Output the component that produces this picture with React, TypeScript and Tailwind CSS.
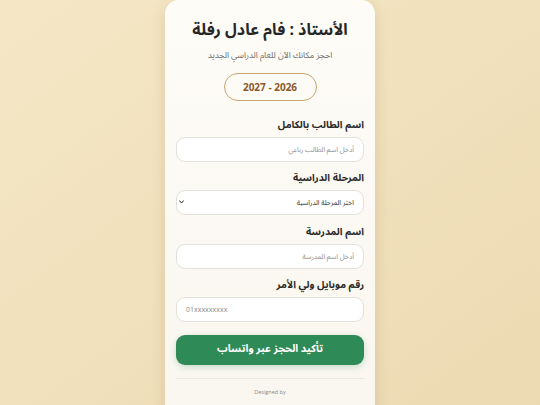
import React from "react";

const font = {
  fontFamily: '"Noto Sans Arabic", "Noto Kufi Arabic", "DejaVu Sans", "Noto Sans", sans-serif',
};

function Field({ label, children }: { label: string; children: React.ReactNode }) {
  return (
    <div className="flex flex-col">
      <div className="h-[14px] text-[10px] leading-[14px] font-bold text-[#2b2b2b] text-right">{label}</div>
      <div className="mt-[5px] h-[25px] relative">{children}</div>
    </div>
  );
}

const inputCls =
  "block w-full h-[25px] rounded-[9px] border border-[#e3e1dc] bg-white px-[9px] text-[7px] leading-[23px] placeholder:text-[#8f8f8f] outline-none";

export default function App() {
  return (
    <div
      dir="rtl"
      style={font}
      className="w-[540px] h-[405px] overflow-hidden bg-gradient-to-br from-[#f5e7c6] to-[#ecdab2] flex justify-center"
    >
      <div className="w-[210px] h-[440px] bg-gradient-to-b from-[#fefcf7] to-[#f9f6ef] rounded-[14px] shadow-[0_4px_14px_rgba(120,90,40,0.18)] px-[11px] pt-[18px] flex flex-col">
        <h1 className="h-[24px] text-[16px] leading-[24px] font-bold text-[#262626] text-center">الأستاذ : فام عادل رفلة</h1>
        <p className="mt-[7px] h-[12px] text-[8.5px] leading-[12px] text-[#6b6b6b] text-center">احجز مكانك الآن للعام الدراسي الجديد</p>
        <div className="mt-[12px] flex justify-center">
          <div className="w-[93px] h-[28px] rounded-full border border-[#c9a46e] flex items-center justify-center text-[10px] font-bold text-[#8a5a2b]">
            <span dir="ltr">2027 - 2026</span>
          </div>
        </div>
        <div className="mt-[17px] flex flex-col gap-[9.4px]">
          <Field label="اسم الطالب بالكامل">
            <input dir="rtl" placeholder="أدخل اسم الطالب رباعي" className={inputCls} />
          </Field>
          <Field label="المرحلة الدراسية">
            <select
              dir="rtl"
              defaultValue=""
              className="block appearance-none w-full h-[25px] rounded-[9px] border border-[#e3e1dc] bg-white pr-[9px] pl-[12px] text-[7px] text-[#333] outline-none"
            >
              <option value="">اختر المرحلة الدراسية</option>
            </select>
            <svg
              className="absolute left-[3px] top-[10px] pointer-events-none"
              width="5"
              height="4"
              viewBox="0 0 10 8"
              fill="none"
            >
              <path d="M1 1.5 L5 6 L9 1.5" stroke="#222" strokeWidth="2" strokeLinecap="round" strokeLinejoin="round" />
            </svg>
          </Field>
          <Field label="اسم المدرسة">
            <input dir="rtl" placeholder="أدخل اسم المدرسة" className={inputCls} />
          </Field>
          <Field label="رقم موبايل ولي الأمر">
            <input dir="ltr" placeholder="01xxxxxxxxx" className={inputCls} />
          </Field>
        </div>
        <button className="mt-[13px] h-[30px] w-full rounded-[9px] bg-[#2e8b57] text-white text-[10.5px] font-bold shadow-[0_2px_6px_rgba(46,139,87,0.25)]">
          تأكيد الحجز عبر واتساب
        </button>
        <div className="mt-[13px] h-px bg-[#ebe7df]" />
        <p dir="ltr" className="mt-[9px] text-[5.5px] leading-[8px] text-[#8a8a8a] text-center" style={{ fontFamily: '"Open Sans", sans-serif' }}>
          Designed by
        </p>
      </div>
    </div>
  );
}
